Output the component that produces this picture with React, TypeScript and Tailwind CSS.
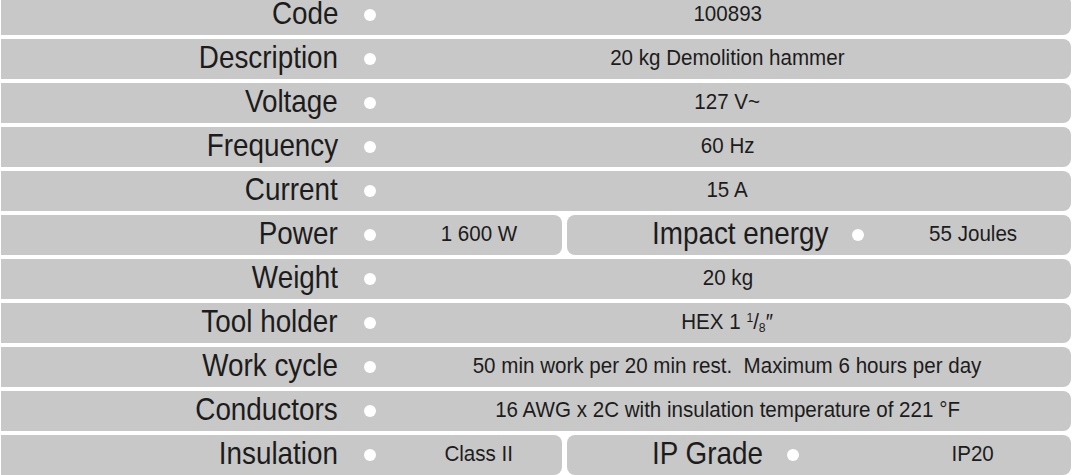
const FONT = "font-['Liberation_Sans',Arial,sans-serif]";

type Row =
  | { label: string; value: React.ReactNode }
  | { label: string; value: React.ReactNode; label2: string; label2W: string; value2: React.ReactNode };

const ROWS: Row[] = [
  { label: "Code", value: "100893" },
  { label: "Description", value: "20 kg Demolition hammer" },
  { label: "Voltage", value: "127 V~" },
  { label: "Frequency", value: "60 Hz" },
  { label: "Current", value: "15 A" },
  { label: "Power", value: "1 600 W", label2: "Impact energy", label2W: "w-[200px]", value2: "55 Joules" },
  { label: "Weight", value: "20 kg" },
  {
    label: "Tool holder",
    value: (
      <>
        HEX 1{" "}
        <span className="relative -top-[7px] text-[13px]">1</span>
        <span>/</span>
        <span className="relative top-[3px] text-[13px]">8</span>
        <span>″</span>
      </>
    ),
  },
  { label: "Work cycle", value: "50 min work per 20 min rest.\u00a0 Maximum 6 hours per day" },
  { label: "Conductors", value: "16 AWG x 2C with insulation temperature of 221 °F" },
  { label: "Insulation", value: "Class II", label2: "IP Grade", label2W: "w-[135px]", value2: "IP20" },
];

// the original uses a condensed face; squeeze Arial metrics horizontally
const labelText = "inline-block whitespace-nowrap text-[32px] leading-none text-[#1c1c1c] scale-x-[0.87] -mt-[3px]";
const valueText = "inline-block whitespace-nowrap text-[22px] leading-none text-[#1c1c1c] scale-x-[0.935] mt-[1px]";

function Bullet() {
  return <span className="block w-[12px] h-[12px] rounded-full bg-white shrink-0" />;
}

export default function App() {
  return (
    <div className={`${FONT} w-[1078px] h-[475px] overflow-hidden bg-white`}>
      <div className="flex flex-col gap-[4px] -mt-[5px] ml-px w-[1070px]">
        {ROWS.map((row) =>
          "label2" in row ? (
            <div key={row.label} className="flex h-[40px] gap-[5px]">
              <div className="flex items-center w-[561px] bg-[#c8c8c8] rounded-r-[8px]">
                <div className="w-[337px] shrink-0 text-right">
                  <span className={`${labelText} origin-right`}>{row.label}</span>
                </div>
                <span className="ml-[26px]">
                  <Bullet />
                </span>
                <div className="flex-1 pl-[20px] text-center">
                  <span className={valueText}>{row.value}</span>
                </div>
              </div>
              <div className="flex items-center flex-1 bg-[#c8c8c8] rounded-[8px]">
                <div className="flex flex-1 items-center pl-[85px]">
                  <div className={`${row.label2W} shrink-0`}>
                    <span className={`${labelText} origin-left`}>{row.label2}</span>
                  </div>
                  <Bullet />
                </div>
                <div className="w-[196px] text-center">
                  <span className={valueText}>{row.value2}</span>
                </div>
              </div>
            </div>
          ) : (
            <div key={row.label} className="flex items-center h-[40px] bg-[#c8c8c8] rounded-r-[8px]">
              <div className="w-[337px] shrink-0 text-right">
                <span className={`${labelText} origin-right`}>{row.label}</span>
              </div>
              <span className="ml-[26px]">
                <Bullet />
              </span>
              <div className="flex-1 pl-[8px] text-center">
                <span className={valueText}>{row.value}</span>
              </div>
            </div>
          )
        )}
      </div>
    </div>
  );
}
